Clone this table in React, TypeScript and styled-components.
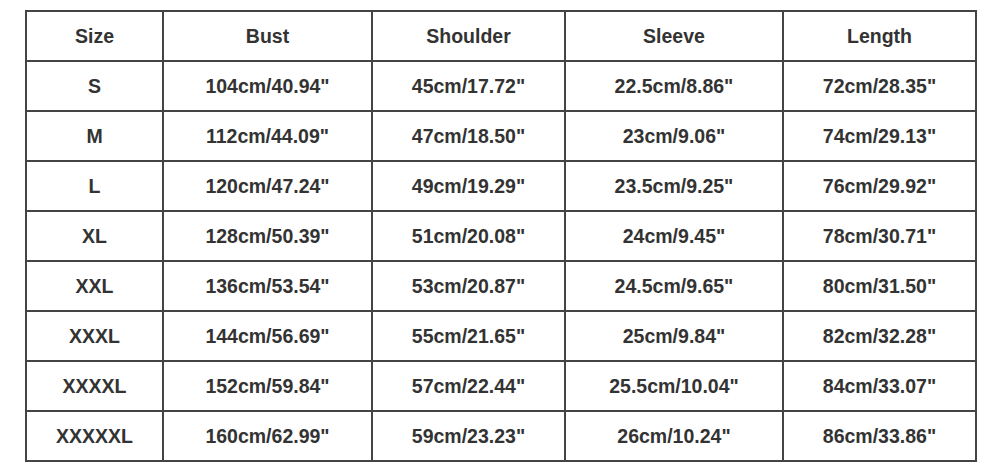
import React from 'react';
import styled, { createGlobalStyle } from 'styled-components';

const GlobalStyle = createGlobalStyle`
  body {
    margin: 0;
    background: #ffffff;
    font-family: "Liberation Sans", Arial, sans-serif;
  }
`;

const COLUMNS = [
  { title: 'Size', width: 137 },
  { title: 'Bust', width: 209 },
  { title: 'Shoulder', width: 193 },
  { title: 'Sleeve', width: 218 },
  { title: 'Length', width: 193 },
];

const ROWS = [
  ['S', '104cm/40.94"', '45cm/17.72"', '22.5cm/8.86"', '72cm/28.35"'],
  ['M', '112cm/44.09"', '47cm/18.50"', '23cm/9.06"', '74cm/29.13"'],
  ['L', '120cm/47.24"', '49cm/19.29"', '23.5cm/9.25"', '76cm/29.92"'],
  ['XL', '128cm/50.39"', '51cm/20.08"', '24cm/9.45"', '78cm/30.71"'],
  ['XXL', '136cm/53.54"', '53cm/20.87"', '24.5cm/9.65"', '80cm/31.50"'],
  ['XXXL', '144cm/56.69"', '55cm/21.65"', '25cm/9.84"', '82cm/32.28"'],
  ['XXXXL', '152cm/59.84"', '57cm/22.44"', '25.5cm/10.04"', '84cm/33.07"'],
  ['XXXXXL', '160cm/62.99"', '59cm/23.23"', '26cm/10.24"', '86cm/33.86"'],
];

const App = () => {
  return (
    <>
      <GlobalStyle />
      <Page>
        <SizeTable>
          <colgroup>
            {COLUMNS.map((col) => (
              <col key={col.title} style={{ width: col.width }} />
            ))}
          </colgroup>
          <thead>
            <tr>
              {COLUMNS.map((col) => (
                <HeadCell key={col.title}>{col.title}</HeadCell>
              ))}
            </tr>
          </thead>
          <tbody>
            {ROWS.map((row) => (
              <tr key={row[0]}>
                {row.map((value, i) => (
                  <Cell key={i}>{value}</Cell>
                ))}
              </tr>
            ))}
          </tbody>
        </SizeTable>
      </Page>
    </>
  );
};

export default App;

const Page = styled.div`
  padding: 10px 0 0 25px;
`;

const SizeTable = styled.table`
  width: 950px;
  table-layout: fixed;
  border-collapse: collapse;
  color: #333333;
`;

const Cell = styled.td`
  height: 48px;
  padding: 0;
  border: 2px solid #444444;
  text-align: center;
  vertical-align: middle;
  font-size: 19.5px;
  font-weight: bold;
`;

const HeadCell = styled(Cell).attrs({ as: 'th' })``;
